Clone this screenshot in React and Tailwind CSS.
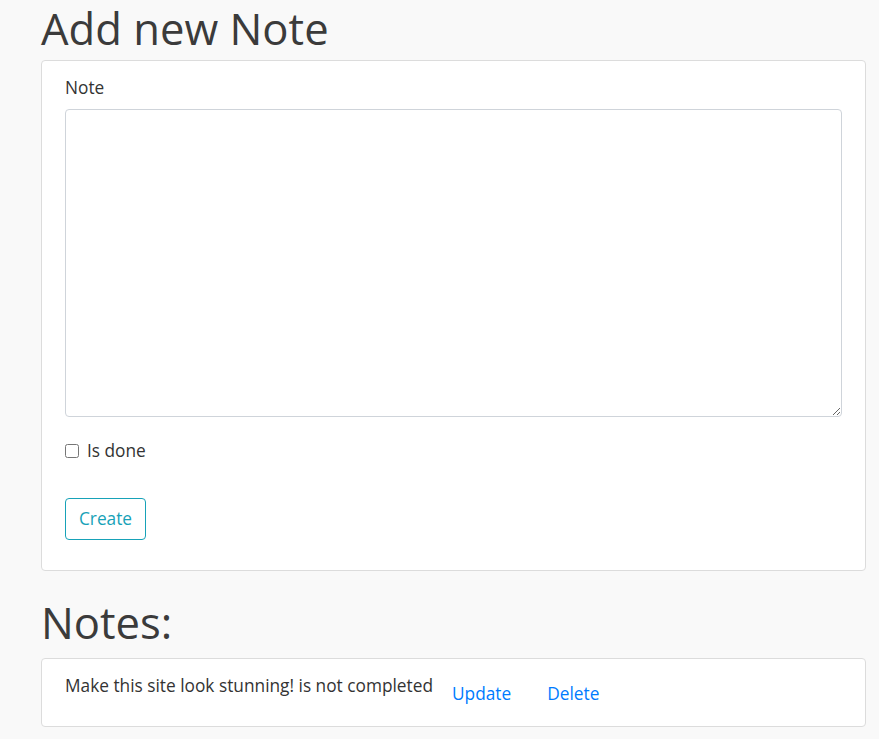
import React, { useState } from 'react';

const App = () => {
    const [note, setNote] = useState('');
    const [done, setDone] = useState(false);

    return (
        <div className="min-h-[739px] bg-[#f9f9f9] pl-[41px] pr-[13px] pt-[2px] text-[#333]" style={{ fontFamily: '"Open Sans", "Noto Sans", sans-serif' }}>
            <h1 className="text-[43.6px] leading-[52px] text-[#3b3b3b] font-normal">Add new Note</h1>
            <div className="mt-[6px] bg-white border border-[#dcdcdc] rounded-[4px] px-[23px] pt-[14px] pb-[30px]">
                <label className="block text-[17.3px] leading-[26px] text-[#333]">Note</label>
                <textarea
                    value={note}
                    onChange={e => setNote(e.target.value)}
                    className="block mt-[8px] w-full h-[308px] border border-[#cfd4da] rounded-[4px] bg-white"
                />
                <label className="mt-[21px] flex items-center gap-[8px] text-[17.3px] leading-[26px]">
                    <input type="checkbox" checked={done} onChange={e => setDone(e.target.checked)} className="w-[14px] h-[14px] m-0" />
                    Is done
                </label>
                <button className="mt-[34px] w-[81px] h-[42px] border border-[#17a2b8] rounded-[4px] text-[#17a2b8] text-[17.3px]">Create</button>
            </div>
            <h2 className="mt-[23px] text-[43.6px] leading-[56px] text-[#3b3b3b] font-normal">Notes:</h2>
            <div className="mt-[8px] bg-white border border-[#dcdcdc] rounded-[4px] px-[23px] pt-[14px] pb-[13px] flex items-start">
                <span className="text-[17.3px] leading-[26px]">Make this site look stunning! is not completed</span>
                <button className="ml-[7px] mt-[2px] px-[12px] py-[6px] text-[17.3px] leading-[26px] text-[#007bff]">Update</button>
                <button className="ml-[12px] mt-[2px] px-[12px] py-[6px] text-[17.3px] leading-[26px] text-[#007bff]">Delete</button>
            </div>
        </div>
    );
};

export default App;
